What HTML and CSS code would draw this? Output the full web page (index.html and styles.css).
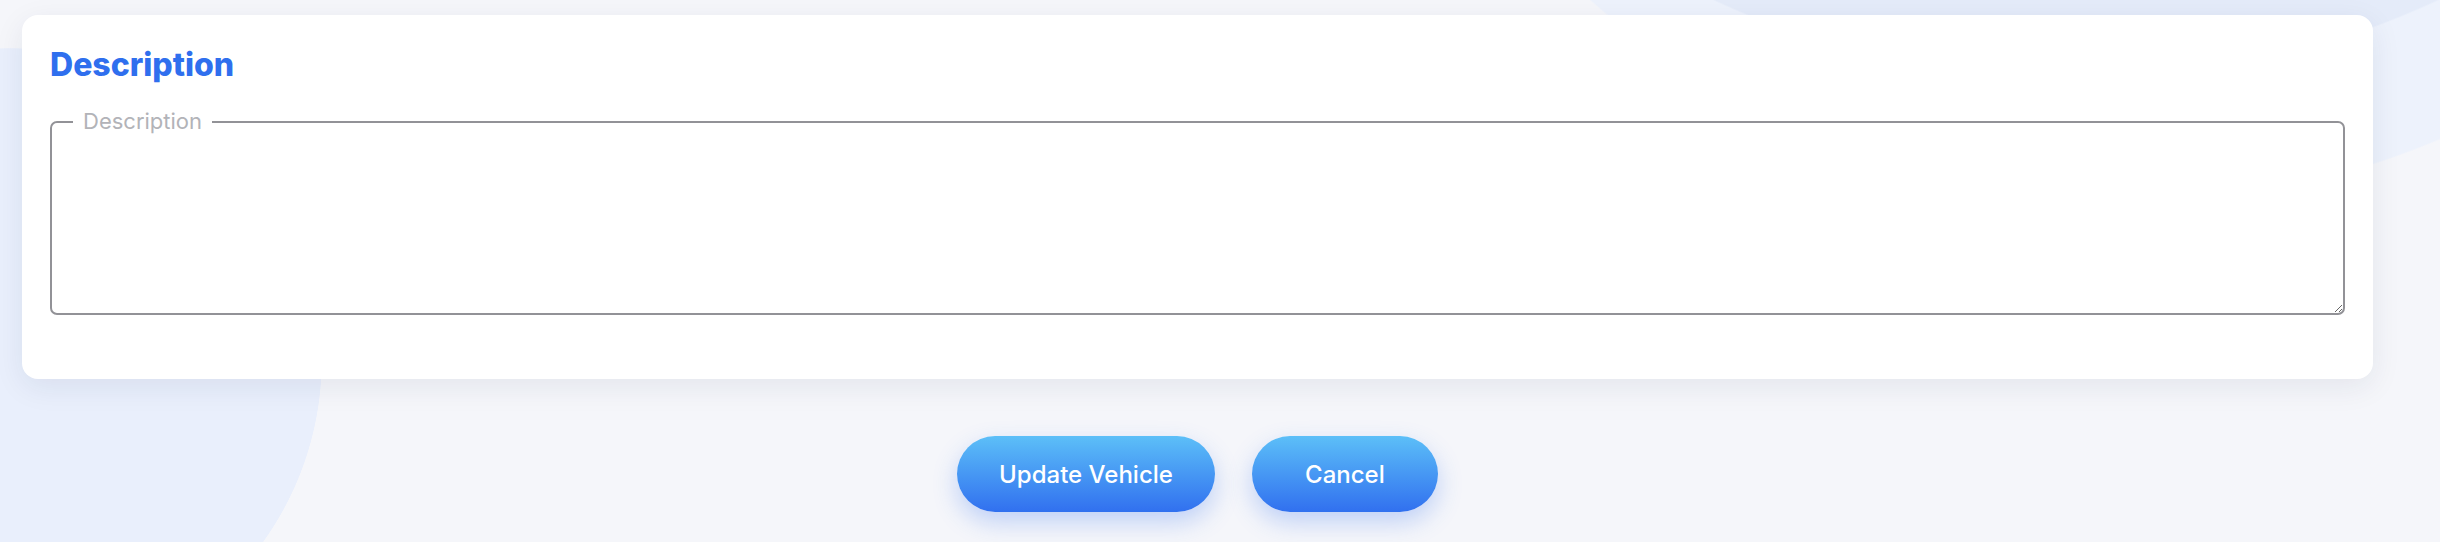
FILE: index.html
```html
<!DOCTYPE html>
<html lang="en">
<head>
<meta charset="utf-8">
<title>Edit Vehicle</title>
<link rel="stylesheet" href="styles.css">
</head>
<body>
<div class="page">
  <section class="card">
    <h2 class="card-title">Description</h2>
    <fieldset class="field">
      <legend class="field-label">Description</legend>
      <textarea class="field-input" aria-label="Description"></textarea>
    </fieldset>
  </section>
  <div class="actions">
    <button class="btn" type="submit">Update Vehicle</button>
    <button class="btn" type="button">Cancel</button>
  </div>
</div>
</body>
</html>
```
FILE: styles.css
```css
html, body {
  margin: 0;
  padding: 0;
}

body {
  font-family: Inter, "Noto Sans", "Liberation Sans", sans-serif;
}

.page {
  box-sizing: border-box;
  min-height: 542px;
  padding: 15px 67px 0 22px;
  background-color: #f5f6fa;
  background-image:
    radial-gradient(circle 860px at 2076px -779px, #e4ebf9 99.8%, rgba(228, 235, 249, 0) 100%),
    radial-gradient(circle 806px at 2125px -602px, #edf2fc 99.8%, rgba(237, 242, 252, 0) 100%),
    radial-gradient(circle 312px at 10px 360px, #e9effc 99.8%, rgba(233, 239, 252, 0) 100%);
  background-repeat: no-repeat;
}

.card {
  background: #ffffff;
  border-radius: 16px;
  padding: 30px 28px 64px;
  box-shadow: 0 8px 30px rgba(30, 40, 80, 0.08);
}

.card-title {
  margin: 0 0 23px;
  font-size: 32px;
  line-height: 40px;
  font-weight: 800;
  color: #2f6fee;
  letter-spacing: 0;
}

.field {
  margin: 0;
  padding: 0;
  border: 2px solid #929297;
  border-radius: 7px;
  min-inline-size: 0;
}

.field-label {
  margin-left: 21px;
  padding: 0 10px;
  font-size: 22px;
  line-height: 27px;
  color: #b2b3b8;
}

.field-input {
  display: block;
  box-sizing: border-box;
  width: 100%;
  height: 178px;
  margin: 0;
  padding: 12px 20px;
  border: none;
  outline: none;
  background: transparent;
  resize: vertical;
  font-family: inherit;
  font-size: 20px;
  border-radius: 0 0 6px 6px;
}

.actions {
  display: flex;
  justify-content: center;
  gap: 37px;
  margin-top: 57px;
}

.btn {
  min-width: 186px;
  height: 76px;
  padding: 0 42px;
  border: none;
  border-radius: 38px;
  background: linear-gradient(180deg, #5cbff8 0%, #3170ef 100%);
  color: #ffffff;
  font-family: inherit;
  font-size: 24px;
  font-weight: 500;
  box-shadow: 0 10px 24px rgba(50, 110, 240, 0.28);
  cursor: pointer;
}
```
